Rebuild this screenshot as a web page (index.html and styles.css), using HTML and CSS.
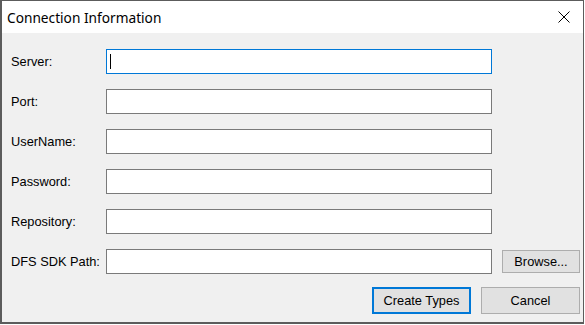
FILE: index.html
```html
<!DOCTYPE html>
<html>
<head>
<meta charset="utf-8">
<link rel="stylesheet" href="styles.css">
</head>
<body>
<div class="window">
  <div class="titlebar">
    <span class="title">Connection Information</span>
    <svg class="close" width="12" height="12" viewBox="0 0 12 12"><path d="M0.5 0.5 L11.5 11.5 M11.5 0.5 L0.5 11.5" stroke="#000" stroke-width="1" fill="none"/></svg>
  </div>
  <div class="content">
    <div class="form">
      <label class="lbl">Server:</label>
      <div class="field focused"><span class="caret"></span></div>
      <span></span>
      <label class="lbl">Port:</label>
      <div class="field"></div>
      <span></span>
      <label class="lbl">UserName:</label>
      <div class="field"></div>
      <span></span>
      <label class="lbl">Password:</label>
      <div class="field"></div>
      <span></span>
      <label class="lbl">Repository:</label>
      <div class="field"></div>
      <span></span>
      <label class="lbl">DFS SDK Path:</label>
      <div class="field"></div>
      <button class="btn browse">Browse...</button>
    </div>
    <div class="actions">
      <button class="btn action default">Create Types</button>
      <button class="btn action">Cancel</button>
    </div>
  </div>
</div>
</body>
</html>
```
FILE: styles.css
```css
html, body {
  margin: 0;
  padding: 0;
  background: #ffffff;
}
.window {
  box-sizing: border-box;
  width: 584px;
  height: 324px;
  border: 1px solid #5c5c5c;
  border-left-width: 2px;
  border-bottom-width: 2px;
  display: flex;
  flex-direction: column;
  background: #f0f0f0;
}
.titlebar {
  height: 32px;
  flex: none;
  background: #ffffff;
  display: flex;
  align-items: center;
  justify-content: space-between;
}
.title {
  font-family: "Noto Sans", sans-serif;
  font-size: 13.7px;
  color: #000;
  padding-left: 5px;
}
.close {
  margin-right: 13px;
  display: block;
}
.content {
  flex: 1;
  padding: 16px 3px 0 9px;
  font-family: "Liberation Sans", Arial, sans-serif;
  font-size: 12.8px;
  color: #000;
}
.form {
  display: grid;
  grid-template-columns: 85px 386px 78px;
  grid-auto-rows: 25px;
  column-gap: 10px;
  row-gap: 15px;
  align-items: center;
}
.lbl {
  color: #000;
  white-space: nowrap;
  min-width: 0;
}
.field {
  box-sizing: border-box;
  height: 25px;
  background: #fff;
  border: 1px solid #7a7a7a;
  display: flex;
  align-items: center;
}
.field.focused {
  border-color: #0078d7;
}
.caret {
  display: block;
  width: 1px;
  height: 15px;
  background: #000;
  margin-left: 3px;
}
.btn {
  box-sizing: border-box;
  font-family: "Liberation Sans", Arial, sans-serif;
  font-size: 12.8px;
  color: #000;
  background: #e1e1e1;
  border: 1px solid #adadad;
  padding: 0;
  margin: 0;
}
.browse {
  height: 23px;
  width: 78px;
}
.actions {
  display: flex;
  justify-content: flex-end;
  gap: 10px;
  margin-top: 13px;
}
.action {
  width: 99px;
  height: 27px;
}
.action.default {
  border: 2px solid #0078d7;
}
```
